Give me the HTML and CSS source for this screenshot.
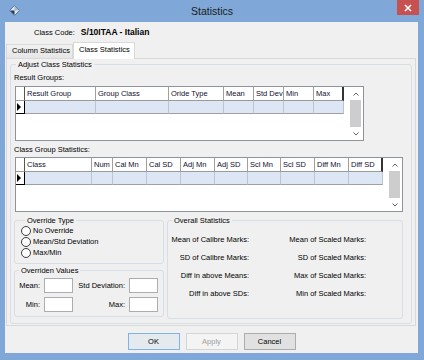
FILE: index.html
```html
<!DOCTYPE html>
<html lang="en">
<head>
    <meta charset="UTF-8">
    <title>Statistics</title>
    <link rel="stylesheet" href="styles.css">
</head>
<body>
    <div class="window">
        <div class="titlebar">
            <div class="icon-box">
                <svg width="11" height="11" viewBox="0 0 11 11">
                    <polygon points="5.5,0.5 10.5,5.5 5.5,10.5 0.5,5.5" fill="#dbe6f0" stroke="#5f7896"/>
                    <polygon points="5.5,5.5 5.5,10 1,5.5" fill="#23385e"/>
                    <polygon points="5.5,1 10,5.5 5.5,5.5" fill="#9fb9d3"/>
                </svg>
            </div>
            <div class="title">Statistics</div>
            <div class="close-box">
                <div class="close">
                    <svg width="8" height="8" viewBox="0 0 8 8">
                        <path d="M1 1 L7 7 M7 1 L1 7" stroke="#fff" stroke-width="1.6"/>
                    </svg>
                </div>
            </div>
        </div>

        <div class="client">
            <div class="class-code">
                <span>Class Code:</span><b>S/10ITAA - Italian</b>
            </div>

            <div class="tabs">
                <div class="tab tab-col">Column Statistics</div>
                <div class="tab tab-cls active">Class Statistics</div>
            </div>

            <div class="tab-page">
                <fieldset class="group adjust">
                    <legend>Adjust Class Statistics</legend>

                    <div class="cap">Result Groups:</div>
                    <div class="grid grid-results">
                        <div class="rows">
                            <div class="row head">
                                <div class="rh"></div>
                                <div>Result Group</div>
                                <div>Group Class</div>
                                <div>Oride Type</div>
                                <div>Mean</div>
                                <div>Std Dev</div>
                                <div>Min</div>
                                <div class="last">Max</div>
                            </div>
                            <div class="row data">
                                <div class="rh"><span class="pointer"></span></div>
                                <div></div><div></div><div></div><div></div>
                                <div></div><div></div><div></div>
                            </div>
                        </div>
                        <div class="vscroll">
                            <div class="arrow"><svg width="6" height="4" viewBox="0 0 6 4"><path d="M0.5 3.5 L3 1 L5.5 3.5" fill="none" stroke="#606060"/></svg></div>
                            <div class="thumb"></div>
                            <div class="arrow"><svg width="6" height="4" viewBox="0 0 6 4"><path d="M0.5 0.5 L3 3 L5.5 0.5" fill="none" stroke="#606060"/></svg></div>
                        </div>
                    </div>

                    <div class="cap cap2">Class Group Statistics:</div>
                    <div class="grid grid-classes">
                        <div class="rows">
                            <div class="row head">
                                <div class="rh"></div>
                                <div>Class</div>
                                <div>Num</div>
                                <div>Cal Mn</div>
                                <div>Cal SD</div>
                                <div>Adj Mn</div>
                                <div>Adj SD</div>
                                <div>Scl Mn</div>
                                <div>Scl SD</div>
                                <div>Diff Mn</div>
                                <div class="last">Diff SD</div>
                            </div>
                            <div class="row data">
                                <div class="rh"><span class="pointer"></span></div>
                                <div></div><div></div><div></div><div></div><div></div>
                                <div></div><div></div><div></div><div></div><div></div>
                            </div>
                        </div>
                        <div class="vscroll">
                            <div class="arrow"><svg width="6" height="4" viewBox="0 0 6 4"><path d="M0.5 3.5 L3 1 L5.5 3.5" fill="none" stroke="#606060"/></svg></div>
                            <div class="thumb"></div>
                            <div class="arrow"><svg width="6" height="4" viewBox="0 0 6 4"><path d="M0.5 0.5 L3 3 L5.5 0.5" fill="none" stroke="#606060"/></svg></div>
                        </div>
                    </div>

                    <div class="lower">
                        <div class="left-col">
                            <fieldset class="group override">
                                <legend>Override Type</legend>
                                <div class="radio"><span class="dot"></span>No Override</div>
                                <div class="radio"><span class="dot"></span>Mean/Std Deviation</div>
                                <div class="radio"><span class="dot"></span>Max/Min</div>
                            </fieldset>
                            <fieldset class="group values">
                                <legend>Overriden Values</legend>
                                <div class="fields">
                                    <span>Mean:</span><span class="box"></span>
                                    <span>Std Deviation:</span><span class="box"></span>
                                    <span>Min:</span><span class="box"></span>
                                    <span>Max:</span><span class="box"></span>
                                </div>
                            </fieldset>
                        </div>
                        <fieldset class="group overall">
                            <legend>Overall Statistics</legend>
                            <div class="stats">
                                <span>Mean of Calibre Marks:</span><span>Mean of Scaled Marks:</span>
                                <span>SD of Calibre Marks:</span><span>SD of Scaled Marks:</span>
                                <span>Diff in above Means:</span><span>Max of Scaled Marks:</span>
                                <span>Diff in above SDs:</span><span>Min of Scaled Marks:</span>
                            </div>
                        </fieldset>
                    </div>
                </fieldset>
            </div>

            <div class="buttons">
                <button class="btn default">OK</button>
                <button class="btn" disabled>Apply</button>
                <button class="btn">Cancel</button>
            </div>
        </div>
    </div>
</body>
</html>
```

FILE: styles.css
```css
* {
    box-sizing: border-box;
}
html, body {
    margin: 0;
}
body {
    width: 424px;
    height: 360px;
    overflow: hidden;
    font-family: "Liberation Sans", Arial, sans-serif;
    font-size: 7.5px;
    line-height: 9px;
    color: #000;
    background: #7fa8d8;
}
.window {
    width: 424px;
    height: 360px;
    background: #7fa8d8;
}

/* title bar */
.titlebar {
    height: 22px;
    display: flex;
}
.icon-box {
    width: 27px;
    padding: 5px 0 0 9px;
}
.title {
    flex: 1;
    text-align: center;
    font-size: 10.5px;
    line-height: 23px;
    color: #1b1b1b;
}
.close-box {
    width: 27px;
}
.close {
    width: 22px;
    height: 15px;
    background: #c75050;
    display: flex;
    align-items: center;
    justify-content: center;
}

/* client area */
.client {
    margin: 0 6px 0 5px;
    height: 331px;
    background: #f0f0f0;
}
.class-code {
    padding: 5px 0 0 29px;
    line-height: 11px;
    height: 16px;
}
.class-code b {
    font-size: 8.5px;
    margin-left: 6px;
}

.tabs {
    display: flex;
    align-items: flex-end;
    height: 16px;
    margin-top: 4px;
    padding-left: 1px;
}
.tab {
    height: 14px;
    line-height: 12px;
    padding-left: 5px;
    border: 1px solid #d9d9d9;
    border-bottom: none;
    background: linear-gradient(#f2f2f2, #e6e6e6);
    white-space: nowrap;
}
.tab-col {
    width: 67px;
}
.tab-cls {
    width: 62px;
}
.tab.active {
    height: 17px;
    line-height: 14px;
    margin-bottom: -1px;
    background: #fff;
    position: relative;
    z-index: 1;
}

.tab-page {
    margin-left: 1px;
    width: 410px;
    height: 268px;
    border: 1px solid #d9d9d9;
    background: #f0f0f0;
}

/* group boxes */
.group {
    margin: 0;
    padding: 0;
    min-width: 0;
    border: 1px solid #d5dfe5;
    border-radius: 3px;
}
.group legend {
    padding: 0 2px;
    margin-left: 4px;
    line-height: 9px;
}
.adjust {
    margin: 1px 0 0 3px;
    width: 402px;
    height: 264px;
    padding-left: 4px;
}
.adjust > legend {
    margin-left: 1px;
}
.cap {
    margin: 4px 0 0 -1px;
}

/* data grids */
.grid {
    display: flex;
    height: 55px;
    border: 1px solid #8e949c;
    background: #fff;
}
.grid-results {
    width: 349px;
    margin-top: 4px;
}
.grid-classes {
    width: 388px;
    margin-top: 3px;
}
.row {
    display: grid;
}
.grid-results .row {
    grid-template-columns: 9px 71px 73px 55px 30px 30px 30px 30px;
}
.grid-classes .row {
    grid-template-columns: 9px 67px 21px 34px 34px 34px 33px 33px 34px 34px 34px;
}
.row > div {
    white-space: nowrap;
    overflow: hidden;
}
.head > div {
    height: 14px;
    line-height: 14px;
    padding-left: 2px;
    border-right: 1px solid #a0a0a0;
    border-bottom: 1px solid #9a9a9a;
    color: #101030;
}
.head > div.last {
    border-right: 2px solid #333;
}
.data > div {
    height: 13px;
    background: #dce6f4;
    border-right: 1px solid #bcc6d3;
    border-bottom: 1px solid #a0a0a0;
}
.row > .rh {
    padding: 0;
    background: #fff;
    border-right: 1px solid #555;
}
.data > .rh {
    border-right-color: #000;
    border-bottom-color: #000;
    display: flex;
    align-items: center;
    padding-left: 1px;
}
.pointer {
    width: 0;
    height: 0;
    border-top: 4px solid transparent;
    border-bottom: 4px solid transparent;
    border-left: 4px solid #000;
}
.vscroll {
    margin-left: auto;
    width: 14px;
    padding: 0 2px 0 1px;
    display: flex;
    flex-direction: column;
}
.arrow {
    height: 13px;
    display: flex;
    align-items: center;
    justify-content: center;
}
.thumb {
    flex: 1;
    background: #cdcdcd;
}

/* lower part */
.lower {
    display: flex;
    gap: 3px;
    margin: 4px 0 0 -1px;
}
.left-col {
    width: 150px;
}
.override {
    height: 48px;
    padding-left: 6px;
}
.radio {
    display: flex;
    align-items: center;
    gap: 2px;
    height: 11px;
}
.dot {
    width: 10px;
    height: 10px;
    border: 1px solid #3c3c3c;
    border-radius: 50%;
    background: #fdfdfd;
}
.values {
    height: 51px;
    margin-top: 2px;
}
.values legend {
    margin-left: 4px;
}
.fields {
    display: grid;
    grid-template-columns: 25px 29px 48px 29px;
    grid-auto-rows: 15px;
    gap: 4px;
    margin-top: 3px;
    align-items: center;
}
.fields span {
    text-align: right;
    white-space: nowrap;
}
.fields .box {
    height: 15px;
    border: 1px solid #abadb3;
    background: #fff;
}
.overall {
    width: 236px;
    height: 103px;
}
.stats {
    display: grid;
    grid-template-columns: 81px 117px;
    grid-auto-rows: 18px;
    margin-top: 5px;
    align-items: center;
}
.stats span {
    text-align: right;
    white-space: nowrap;
}

/* buttons */
.buttons {
    display: flex;
    justify-content: center;
    gap: 6px;
    margin-top: 7px;
}
.btn {
    width: 52px;
    height: 17px;
    padding: 0;
    font-family: "Liberation Sans", Arial, sans-serif;
    font-size: 7.5px;
    color: #000;
    border: 1px solid #adadad;
    background: #e1e1e1;
}
.btn.default {
    border-color: #7eb4ea;
    background: #e5eaef;
}
.btn:disabled {
    border-color: #d5d5d5;
    background: #f4f4f4;
    color: #a0a0a0;
}
```
